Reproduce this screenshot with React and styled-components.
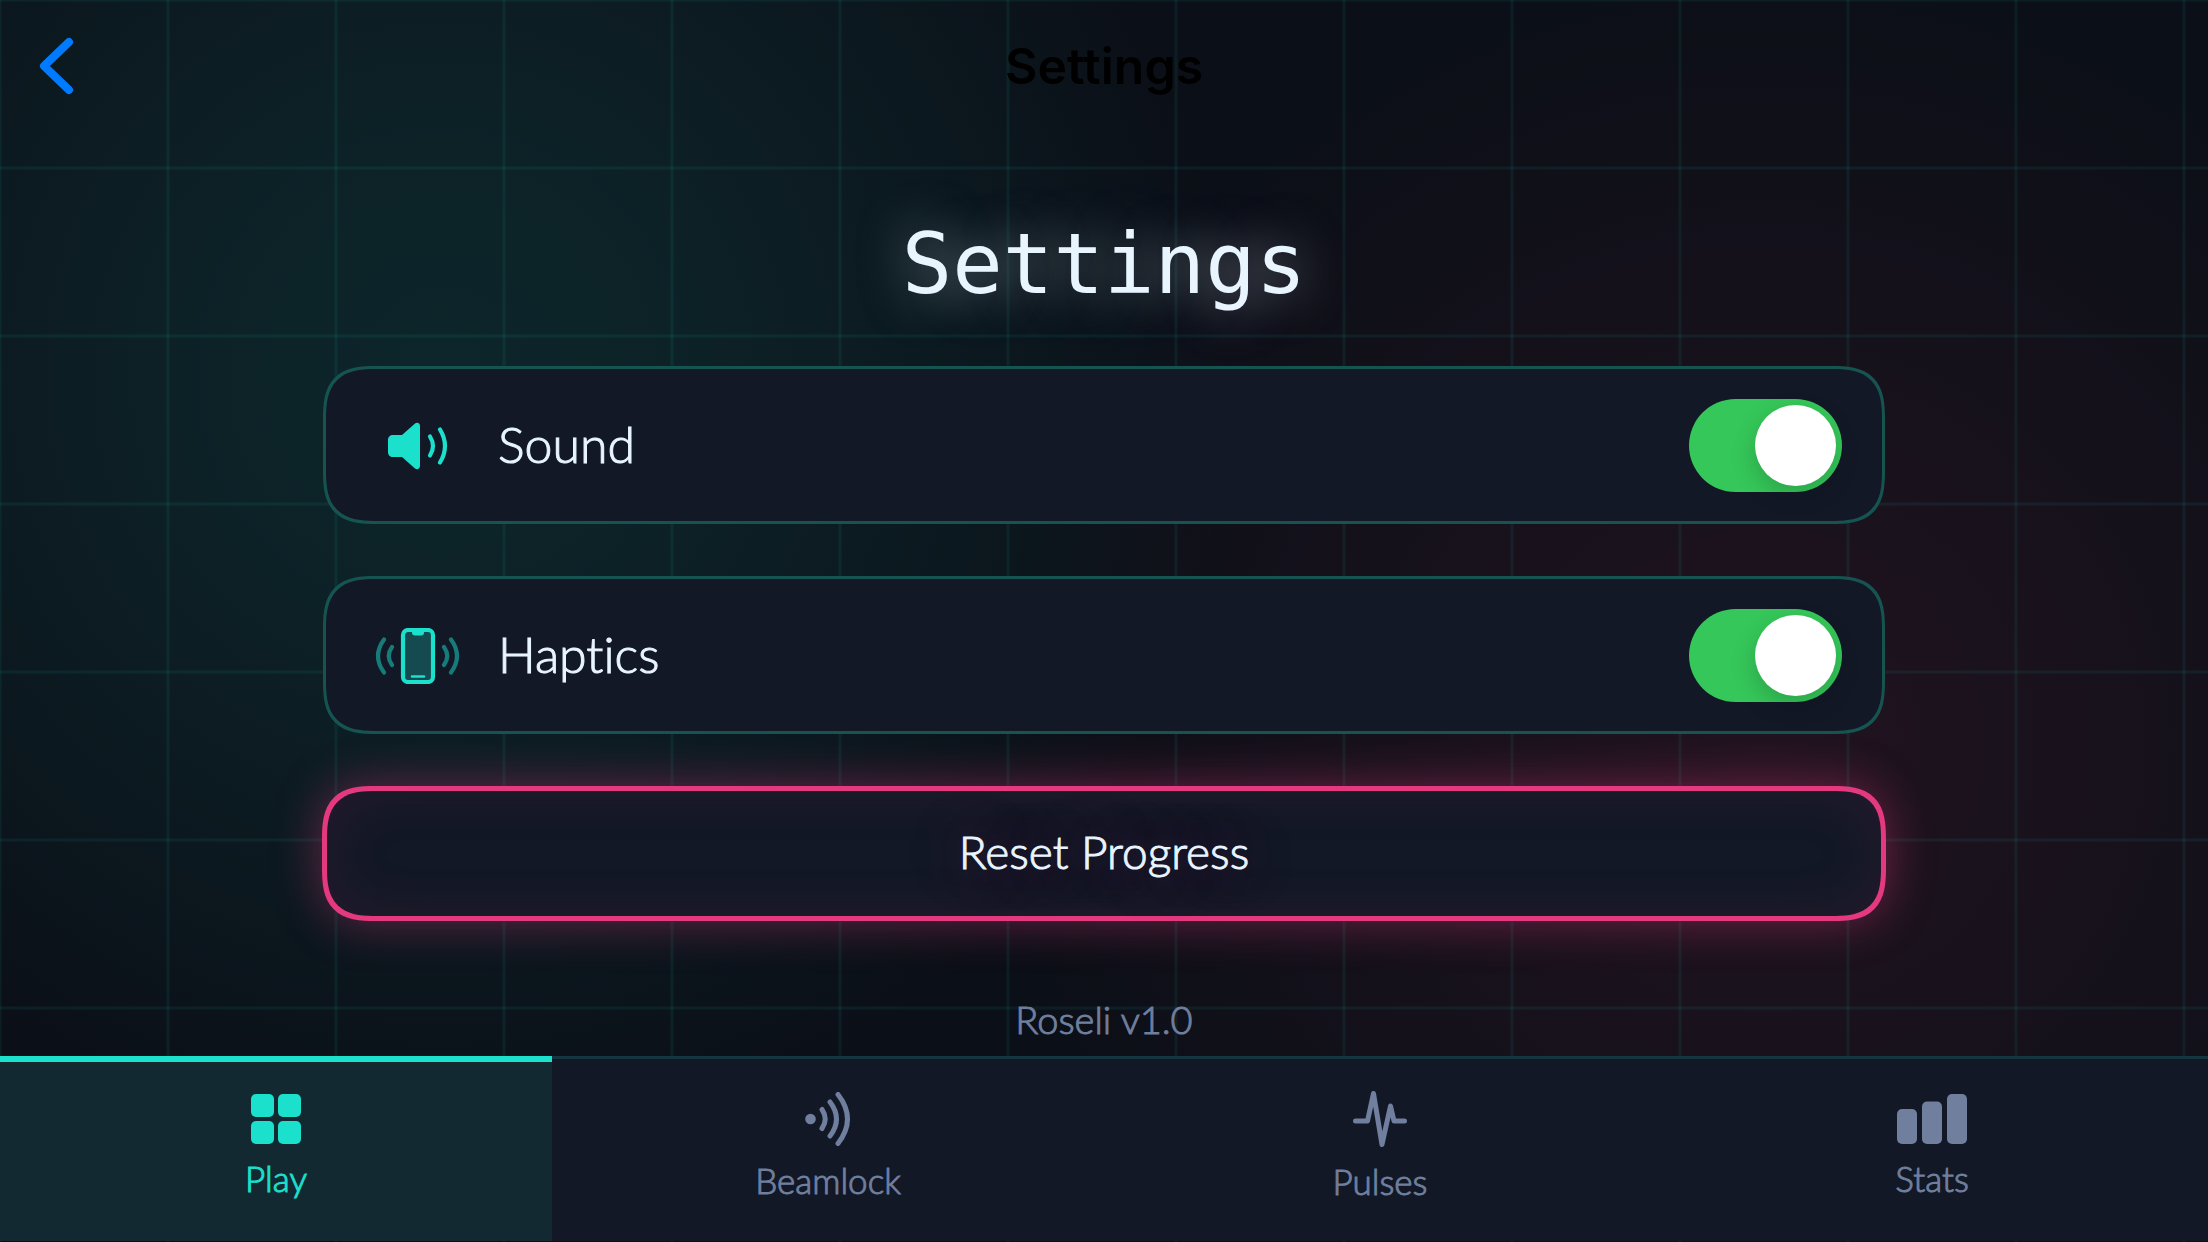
import React, { useState } from "react";
import styled, { createGlobalStyle, css } from "styled-components";

const GlobalStyle = createGlobalStyle`
  * {
    box-sizing: border-box;
  }
  body {
    margin: 0;
    background: #0b0f17;
    font-family: "Lato", "Open Sans", sans-serif;
    font-weight: 300;
    font-variant-ligatures: none;
  }
`;

const teal = "#1ae0cc";
const pink = "#e5397f";
const panel = "#121826";
const text = "#e8f5ff";
const muted = "#6f7f9d";

// soft edged 4px line
const gridLine = `
  rgba(26, 224, 202, 0.04) 0 1px,
  rgba(26, 224, 202, 0.07) 1px 3px,
  rgba(26, 224, 202, 0.04) 3px 4px,
  transparent 4px
`;

const roundedPanel = css`
  border-radius: 45px;
  @supports (corner-shape: superellipse(1.5)) {
    border-radius: 54px;
    corner-shape: superellipse(1.5);
  }
`;

// light weight is a touch too thin on the dark panels
const bookWeight = css`
  -webkit-text-stroke: 1px currentColor;
`;

const Screen = styled.div`
  min-height: 100vh;
  display: flex;
  flex-direction: column;
  padding-bottom: 1px;
  background-color: #0b0f17;
  /* grid lines on top, then the two glows */
  background-image:
    linear-gradient(90deg, ${gridLine}),
    linear-gradient(${gridLine}),
    radial-gradient(
      circle 800px at 20% 30%,
      rgba(26, 224, 202, 0.11),
      rgba(26, 224, 202, 0.09) 30%,
      rgba(26, 224, 202, 0)
    ),
    radial-gradient(
      circle 780px at 80% 60%,
      rgba(229, 57, 110, 0.1),
      rgba(229, 57, 110, 0.07) 30%,
      rgba(229, 57, 110, 0)
    );
  background-size: 168px 168px, 168px 168px, auto, auto;
  background-position: -2px -2px, -2px -2px, 0 0, 0 0;
`;

const TopBar = styled.header`
  height: 132px;
  padding: 0 36px;
  display: grid;
  grid-template-columns: 1fr auto 1fr;
  align-items: center;
`;

const BackButton = styled.button`
  justify-self: start;
  display: flex;
  padding: 0;
  border: none;
  background: none;
  color: #007aff;
  cursor: pointer;
`;

const BarTitle = styled.span`
  font-family: "Inter", sans-serif;
  font-size: 50px;
  font-weight: 600;
  line-height: 62px;
  color: #000;
`;

const Main = styled.main`
  flex: 1;
  display: flex;
  flex-direction: column;
  align-items: center;
  gap: 52px;
  padding: 82px 60px 10px;
`;

const Title = styled.h1`
  margin: 0;
  font-family: "DejaVu Sans Mono", monospace;
  font-size: 84px;
  font-weight: 400;
  line-height: 100px;
  color: ${text};
  text-shadow: 0 0 48px rgba(232, 245, 255, 0.5);
`;

const Row = styled.label`
  width: 100%;
  max-width: 1562px;
  display: flex;
  align-items: center;
  gap: 28px;
  padding: 30px 40px 29px;
  border: 3px solid #165452;
  ${roundedPanel}
  background: ${panel};
  cursor: pointer;
`;

const IconSlot = styled.span`
  width: 104px;
  display: flex;
  justify-content: center;
  color: ${teal};
`;

const RowLabel = styled.span`
  flex: 1;
  padding-bottom: 4px;
  font-size: 50px;
  line-height: 60px;
  color: ${text};
  ${bookWeight}
`;

const Toggle = styled.input`
  appearance: none;
  width: 153px;
  height: 93px;
  margin: 0;
  padding: 6px;
  display: flex;
  border-radius: 47px;
  background: #39394a;
  cursor: pointer;

  &::before {
    content: "";
    width: 81px;
    height: 81px;
    border-radius: 50%;
    background: #fff;
    box-shadow: 0 9px 24px rgba(0, 0, 0, 0.18);
  }
  &:checked {
    justify-content: flex-end;
    background: #35c759;
  }
`;

const ResetButton = styled.button`
  width: 100%;
  max-width: 1564px;
  padding: 34px 38px 38px;
  border: 5px solid ${pink};
  ${roundedPanel}
  background: ${panel};
  box-shadow:
    0 0 48px rgba(229, 57, 127, 0.42),
    inset 0 0 60px rgba(229, 57, 127, 0.09);
  font: inherit;
  font-size: 46px;
  line-height: 53px;
  color: ${text};
  text-shadow: 0 0 48px rgba(229, 57, 127, 0.5);
  cursor: pointer;
  ${bookWeight}
`;

const Version = styled.p`
  margin: 22px 0 0;
  font-size: 38px;
  line-height: 48px;
  color: ${muted};
  ${bookWeight}
`;

const TabBar = styled.nav`
  height: 185px;
  display: grid;
  grid-template-columns: repeat(4, 1fr);
  background: ${panel};
`;

const Tab = styled.button`
  display: flex;
  flex-direction: column;
  align-items: center;
  justify-content: center;
  gap: 12px;
  padding: 0 0 4px;
  border: none;
  background: none;
  box-shadow: inset 0 3px #14343e;
  font: inherit;
  font-size: 35px;
  line-height: 44px;
  color: ${muted};
  cursor: pointer;
  ${bookWeight}

  ${(props) =>
    props.$active &&
    css`
      color: ${teal};
      background: #132932;
      box-shadow: inset 0 6px ${teal};
    `}
`;

const stroke = {
  fill: "none",
  stroke: "currentColor",
  strokeLinecap: "round",
  strokeLinejoin: "round",
};

const BackIcon = () => (
  <svg width="42" height="60" viewBox="0 0 42 60" aria-hidden="true">
    <path d="M33 6 8 30l25 24" strokeWidth="8" {...stroke} />
  </svg>
);

const SoundIcon = () => (
  <svg width="60" height="48" viewBox="0 0 60 48" aria-hidden="true">
    <path
      d="M5 13h9L27 1.500c2-1.500 5-.5 5 2.500v40c0 3-3 4-5 2.500L14 35H5c-3 0-5-2-5-5V18c0-3 2-5 5-5z"
      fill="currentColor"
    />
    <path d="M42 14.500q6 9.500 0 19" strokeWidth="4.200" {...stroke} />
    <path d="M52 7.500q10 16.500 0 33" strokeWidth="4.200" {...stroke} />
  </svg>
);

const HapticsIcon = () => (
  <svg width="88" height="56" viewBox="0 0 86 56" aria-hidden="true">
    <rect x="28" y="2" width="30" height="52" rx="5" fill="#154b50" stroke="currentColor" strokeWidth="4.200" />
    <path d="M37 3h12v1.500q0 3-3 3h-6q-3 0-3-3z" fill="currentColor" />
    <path d="M37 48.500h12" strokeWidth="2.500" {...stroke} />
    <g opacity="0.5" strokeWidth="4.200" {...stroke}>
      <path d="M9 11.500q-12 16.500 0 33M17 19q-6.500 9 0 18" />
      <path d="M76 11.500q12 16.500 0 33M69 19q6.500 9 0 18" />
    </g>
  </svg>
);

const PlayIcon = () => (
  <svg width="50" height="50" viewBox="0 0 50 50" fill="currentColor" aria-hidden="true">
    <rect width="23" height="23" rx="5" />
    <rect x="27" width="23" height="23" rx="5" />
    <rect y="27" width="23" height="23" rx="5" />
    <rect x="27" y="27" width="23" height="23" rx="5" />
  </svg>
);

const BeamIcon = () => (
  <svg width="46" height="54" viewBox="0 0 46 54" aria-hidden="true">
    <circle cx="5.500" cy="27" r="5.300" fill="currentColor" />
    <path d="M17 17.500q6.500 9.500 0 19M25 10q13 17 0 34M33 2.500q19 24.500 0 49" strokeWidth="5" {...stroke} />
  </svg>
);

const PulseIcon = () => (
  <svg width="54" height="56" viewBox="0 0 54 56" aria-hidden="true">
    <path d="M2.500 30H14.500L20.500 2.500 29 53.500 37.500 15 41 30H51.500" strokeWidth="5" {...stroke} />
  </svg>
);

const StatsIcon = () => (
  <svg width="70" height="50" viewBox="0 0 70 50" fill="currentColor" aria-hidden="true">
    <rect y="15" width="20" height="35" rx="5" />
    <rect x="25" y="7.500" width="20" height="42.500" rx="5" />
    <rect x="50" width="20" height="50" rx="5" />
  </svg>
);

const tabs = [
  { name: "Play", Icon: PlayIcon },
  { name: "Beamlock", Icon: BeamIcon },
  { name: "Pulses", Icon: PulseIcon },
  { name: "Stats", Icon: StatsIcon },
];

const App = () => {
  const [sound, setSound] = useState(true);
  const [haptics, setHaptics] = useState(true);
  const [tab, setTab] = useState("Play");

  return (
    <>
      <GlobalStyle />
      <Screen>
        <TopBar>
          <BackButton aria-label="Back">
            <BackIcon />
          </BackButton>
          <BarTitle>Settings</BarTitle>
        </TopBar>
        <Main>
          <Title>Settings</Title>
          <Row>
            <IconSlot>
              <SoundIcon />
            </IconSlot>
            <RowLabel>Sound</RowLabel>
            <Toggle type="checkbox" checked={sound} onChange={(e) => setSound(e.target.checked)} />
          </Row>
          <Row>
            <IconSlot>
              <HapticsIcon />
            </IconSlot>
            <RowLabel>Haptics</RowLabel>
            <Toggle type="checkbox" checked={haptics} onChange={(e) => setHaptics(e.target.checked)} />
          </Row>
          <ResetButton>Reset Progress</ResetButton>
          <Version>Roseli v1.0</Version>
        </Main>
        <TabBar>
          {tabs.map(({ name, Icon }) => (
            <Tab key={name} $active={tab === name} onClick={() => setTab(name)}>
              <Icon />
              {name}
            </Tab>
          ))}
        </TabBar>
      </Screen>
    </>
  );
};

export default App;
